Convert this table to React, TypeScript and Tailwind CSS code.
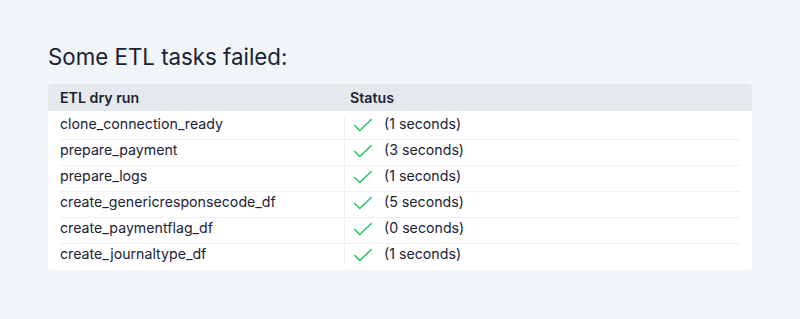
const rows = [
  { name: 'clone_connection_ready', secs: 1 },
  { name: 'prepare_payment', secs: 3 },
  { name: 'prepare_logs', secs: 1 },
  { name: 'create_genericresponsecode_df', secs: 5 },
  { name: 'create_paymentflag_df', secs: 0 },
  { name: 'create_journaltype_df', secs: 1 },
]

function Check() {
  return (
    <svg className="w-[22px] h-[22px] -mb-[2px] shrink-0 text-[#22c55e]" viewBox="0 0 24 24" fill="none" stroke="currentColor" strokeWidth="1.6" strokeLinecap="round" strokeLinejoin="round">
      <path d="M3 12.5l5.5 5.5L21 6" />
    </svg>
  )
}

export default function App() {
  return (
    <div className="min-h-[319px] bg-[#f1f4f8] px-12 pt-[43px] text-[#1a2233]" style={{ fontFamily: 'Inter, "Liberation Sans", sans-serif' }}>
      <h1 className="text-[22.3px] leading-[28px] font-normal mb-[13px]">Some ETL tasks failed:</h1>

      <div className="bg-white rounded overflow-hidden">
        <div className="flex bg-[#e5e9ee] h-[27px] items-center text-[14.2px] font-semibold">
          <div className="w-[296px] pl-3">ETL dry run</div>
          <div className="pl-[6px]">Status</div>
        </div>
        <div className="px-3 pt-[3px] pb-px">
          {rows.map((r, i) => (
            <div key={r.name} className={`flex text-[14.2px] leading-5 ${i < rows.length - 1 ? 'border-b border-[#eef1f4]' : ''}`}>
              <div className="w-[284px] pb-[5px]">{r.name}</div>
              <div className={`w-px bg-[#eef1f4] ${i === 0 ? 'mt-[3px]' : ''} ${i === rows.length - 1 ? 'mb-[4px]' : ''}`} />
              <div className="flex items-start pl-[7px] gap-[10px] pb-[5px]">
                <Check />
                <span>({r.secs} seconds)</span>
              </div>
            </div>
          ))}
        </div>
      </div>
    </div>
  )
}
